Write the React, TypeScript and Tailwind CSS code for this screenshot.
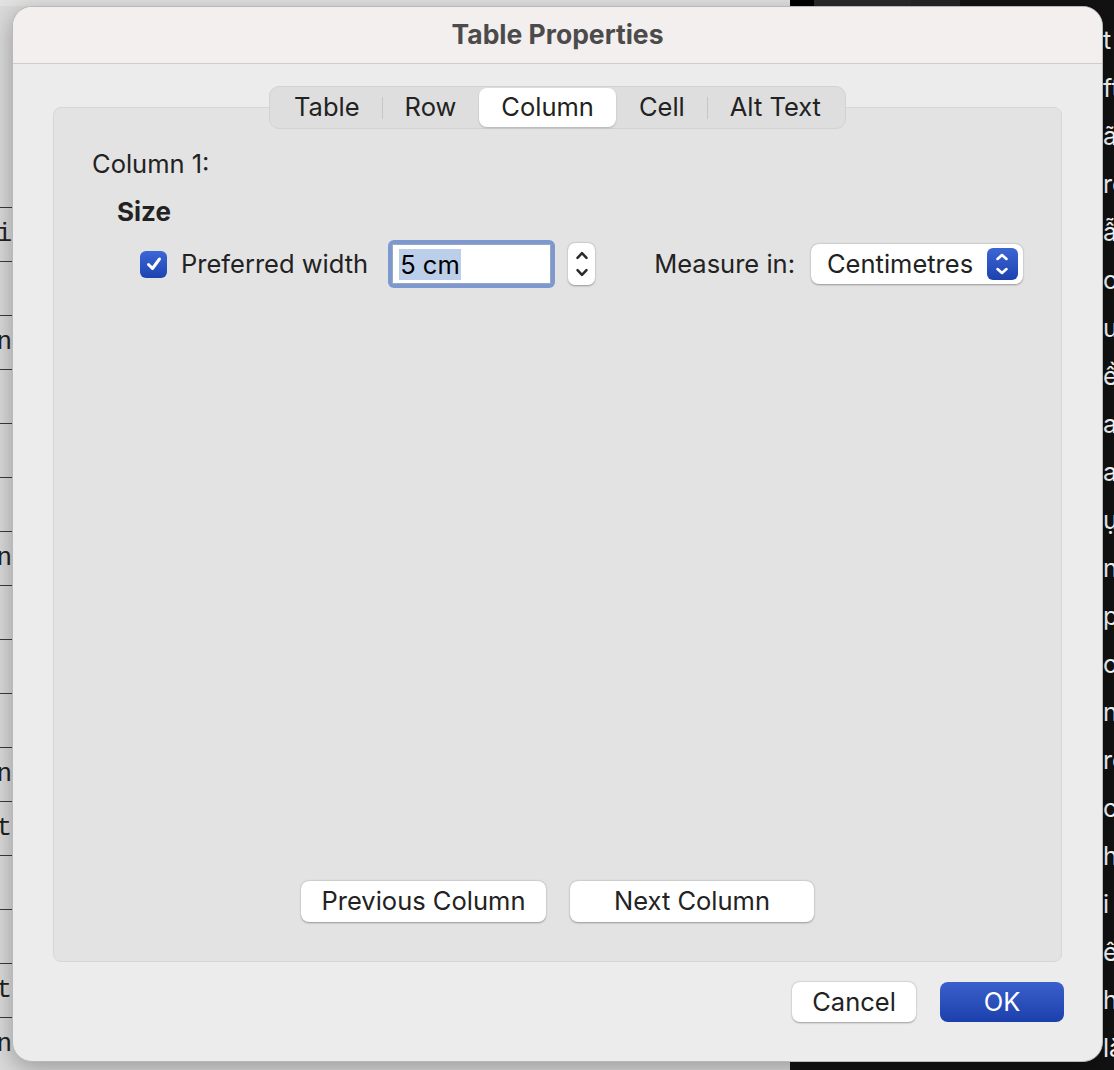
import React from "react";

const font = { fontFamily: "Inter, 'Noto Sans', 'Liberation Sans', sans-serif" };

function Chevrons({ color, w = 13, h = 30, sw = 1.9 }: { color: string; w?: number; h?: number; sw?: number }) {
  const H = (h / w) * 10;
  return (
    <svg width={w} height={h} viewBox={`0 0 10 ${H}`} fill="none">
      <path d={`M1.8 ${H * 0.32} L5 ${H * 0.18} L8.2 ${H * 0.32}`} stroke={color} strokeWidth={sw} strokeLinecap="round" strokeLinejoin="round" />
      <path d={`M1.8 ${H * 0.68} L5 ${H * 0.82} L8.2 ${H * 0.68}`} stroke={color} strokeWidth={sw} strokeLinecap="round" strokeLinejoin="round" />
    </svg>
  );
}

const rightLines = ["t", "ft", "ãi", "rò", "ẫn", "o", "u", "ền", "a", "an", "ự", "n", "p", "o", "n", "rò", "c", "hi", "i", "ê", "hấ", "lắ"];
const leftGlyphs: Record<number, string> = { 0: "i", 2: "n", 6: "n", 10: "n", 11: "t", 14: "t", 15: "n" };

export default function App() {
  const tabs = ["Table", "Row", "Column", "Cell", "Alt Text"];
  const selected = 2;
  return (
    <div className="relative w-[1114px] h-[1070px] overflow-hidden flex bg-[#e6e6e6]" style={font}>
      {/* document background */}
      <div className="w-[790px] shrink-0 h-full flex flex-col bg-[#dadada]">
        <div className="h-[6px] shrink-0 bg-[#e2e2e2]" />
        <div className="h-[202px] shrink-0 border-b border-[#3a3a3a]" />
        {Array.from({ length: 16 }).map((_, i) => (
          <div
            key={i}
            className="h-[54px] shrink-0 border-b border-[#3a3a3a] flex items-center justify-end pr-[778px] text-[26px] text-[#222]"
            style={{ fontFamily: "'Liberation Mono', monospace" }}
          >
            {leftGlyphs[i] ?? ""}
          </div>
        ))}
      </div>
      <div className="flex-1 h-full bg-[#121212] flex flex-col text-white text-[25px] leading-[48px] overflow-hidden">
        <div className="h-[6px] shrink-0 flex">
          <div className="w-[24px] bg-black" />
          <div className="w-[97px] bg-[#2a2a2a]" />
          <div className="w-[49px] bg-[#262626]" />
          <div className="flex-1 bg-[#121212]" />
        </div>
        <div className="pl-[313px] pt-[10px] flex flex-col">
          {rightLines.map((t, i) => (
            <div key={i} className="whitespace-nowrap">{t}</div>
          ))}
        </div>
      </div>

      {/* dialog */}
      <div className="absolute left-[12px] top-[6px] w-[1091px] h-[1056px] rounded-[20px] overflow-hidden border border-[#b9b9b9] bg-[#ececec] flex flex-col shadow-[0_6px_24px_rgba(0,0,0,0.3)]">
        <div className="h-[57px] shrink-0 bg-[#f4efef] border-b border-[#cdcdcd] flex items-center justify-center">
          <span className="text-[26.5px] font-bold text-[#4b4b4b]">Table Properties</span>
        </div>
        <div className="flex-1 flex flex-col px-[40px] pt-[22px] text-[25.5px]">
          <div className="flex justify-center relative z-10">
            <div className="flex items-center p-[2px] h-[43px] bg-[#dedede] border border-[#d2d2d2] rounded-[10px]">
              {tabs.map((t, i) => (
                <React.Fragment key={t}>
                  {i > 0 && (
                    <div
                      className={
                        i === selected || i === selected + 1
                          ? "w-px h-[22px] bg-transparent"
                          : "w-px h-[22px] bg-[#c6c6c6]"
                      }
                    />
                  )}
                  <div
                    className={
                      i === selected
                        ? "h-[39px] px-[22px] flex items-center rounded-[8px] bg-white shadow-[0_1px_2px_rgba(0,0,0,0.2)] text-[#222]"
                        : "h-[39px] px-[22px] flex items-center text-[#222]"
                    }
                  >
                    {t}
                  </div>
                </React.Fragment>
              ))}
            </div>
          </div>
          <div className="-mt-[22px] h-[855px] shrink-0 bg-[#e3e3e3] border border-[#d6d6d6] rounded-[8px] flex flex-col pl-[38px] pt-[41px] pb-[39px] text-[#222]">
            <div className="leading-[29px]">Column 1:</div>
            <div className="mt-[19px] ml-[25px] text-[26px] leading-[29px] font-bold">Size</div>
            <div className="mt-[14px] ml-[48px] flex items-center h-[48px]">
              <div className="w-[27px] h-[27px] rounded-[6px] bg-gradient-to-b from-[#3c67d8] to-[#1d43b0] flex items-center justify-center">
                <svg width="18" height="18" viewBox="0 0 18 18" fill="none">
                  <path d="M3.5 9.5 L7.5 13.5 L14.5 4" stroke="white" strokeWidth="3" strokeLinecap="round" strokeLinejoin="round" />
                </svg>
              </div>
              <span className="ml-[14px]">Preferred width</span>
              <div className="ml-[20px] w-[167px] h-[48px] rounded-[6px] bg-[#7d98cf] p-[4px]">
                <div className="w-full h-full bg-white border border-[#9aa7c0] flex items-center pl-[6px]">
                  <span className="bg-[#bccfea] text-black leading-[31px] px-[1px]">5 cm</span>
                </div>
              </div>
              <div className="ml-[13px] w-[27px] h-[42px] rounded-[7px] bg-white shadow-[0_0.5px_2px_rgba(0,0,0,0.35)] flex flex-col items-center justify-center">
                <Chevrons color="#2a2a2a" w={14} h={34} sw={1.8} />
              </div>
              <span className="ml-[59px]">Measure in:</span>
              <div className="ml-[16px] w-[212px] h-[40px] rounded-[8px] bg-white shadow-[0_0.5px_2px_rgba(0,0,0,0.35)] flex items-center justify-between pl-[16px] pr-[5px]">
                <span>Centimetres</span>
                <div className="w-[31px] h-[32px] rounded-[6px] bg-gradient-to-b from-[#3d66d5] to-[#1d42ae] flex items-center justify-center">
                  <Chevrons color="white" w={14} h={28} sw={1.9} />
                </div>
              </div>
            </div>
            <div className="flex-1" />
            <div className="flex justify-center gap-[24px] pr-[38px]">
              <div className="w-[245px] h-[41px] rounded-[8px] bg-white shadow-[0_0.5px_2px_rgba(0,0,0,0.35)] flex items-center justify-center">
                Previous Column
              </div>
              <div className="w-[244px] h-[41px] rounded-[8px] bg-white shadow-[0_0.5px_2px_rgba(0,0,0,0.35)] flex items-center justify-center">
                Next Column
              </div>
            </div>
          </div>
          <div className="mt-[20px] flex justify-end gap-[24px] -mr-[2px]">
            <div className="w-[124px] h-[40px] rounded-[8px] bg-white shadow-[0_0.5px_2px_rgba(0,0,0,0.35)] flex items-center justify-center text-[#222]">
              Cancel
            </div>
            <div className="w-[124px] h-[40px] rounded-[8px] bg-gradient-to-b from-[#3b60cc] to-[#1c40ab] flex items-center justify-center text-white">
              OK
            </div>
          </div>
        </div>
      </div>
    </div>
  );
}
